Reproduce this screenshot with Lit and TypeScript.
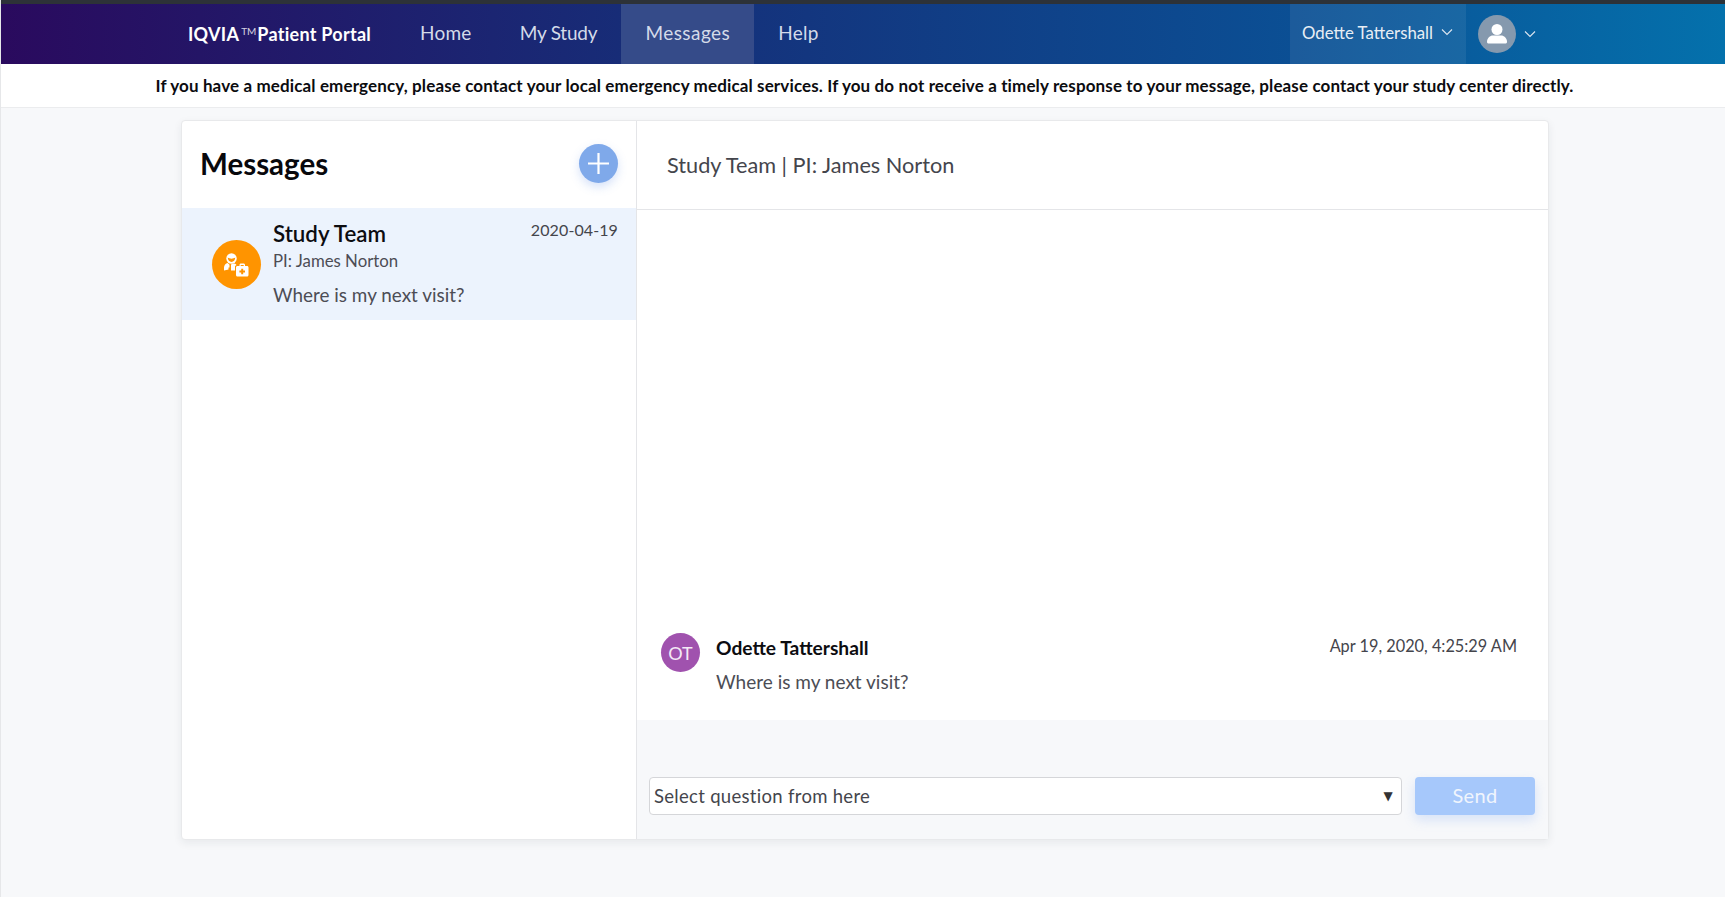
import { LitElement, html, css } from "lit";
import { customElement } from "lit/decorators.js";

const chevron = html`<svg class="chev" width="12" height="8" viewBox="0 0 12 8"><path d="M1 1.5l5 5 5-5" fill="none" stroke="currentColor" stroke-width="1.1"/></svg>`;

@customElement("app-root")
export class AppRoot extends LitElement {
    static styles = css`
    :host {
        display: block;
        height: 897px;
        overflow: hidden;
        background: #f7f8fa;
        font-family: "Lato", "Open Sans", sans-serif;
        color: #3f4048;
        border-left: 1px solid #e6e7e9;
        box-sizing: border-box;
    }

    .strip { height: 4px; background: #2d3238; margin-left: -1px; }

    nav {
        height: 60px;
        display: flex;
        align-items: stretch;
        background: linear-gradient(90deg, #2a0a5e 0%, #15307a 40%, #0b4f94 75%, #0471ac 100%);
        color: #fff;
        padding-left: 187px;
    }

    .brand {
        display: flex;
        align-items: center;
        width: 196px;
        font-size: 18px;
        font-weight: 700;
        letter-spacing: .27px;
        white-space: nowrap;
    }
    .brand sup { font-size: 10px; font-weight: 400; margin: -6px 1px 0 2px; opacity: .8; letter-spacing: 0; }

    .links { display: flex; margin-left: 12px; }
    .links a {
        display: flex;
        align-items: center;
        padding: 0 24px 4px;
        font-size: 19px;
        letter-spacing: .25px;
        color: #d4dbe9;
        box-sizing: border-box;
    }
    .links a.tight { letter-spacing: -.2px; }
    .links a.active { background: #354b89; letter-spacing: .45px; }

    .right { margin-left: auto; display: flex; align-items: stretch; padding-right: 189px; }
    .user {
        width: 176px;
        box-sizing: border-box;
        display: flex;
        align-items: center;
        gap: 8px;
        padding: 0 0 4px 12px;
        background: rgba(255, 255, 255, .07);
        font-size: 16.800px;
        color: #e8eef5;
        white-space: nowrap;
    }
    .chev { flex: none; color: #dde6f0; }
    .account { display: flex; align-items: center; gap: 8px; padding-left: 12px; }
    .face {
        width: 38px;
        height: 38px;
        border-radius: 50%;
        background: #8599ae;
        display: flex;
        align-items: center;
        justify-content: center;
    }

    .notice {
        height: 44px;
        background: #fff;
        border-bottom: 1px solid #ebecee;
        box-sizing: border-box;
        display: flex;
        align-items: center;
        justify-content: center;
        padding-left: 3px;
        font-size: 17px;
        letter-spacing: .125px;
        font-weight: 700;
        color: #0c0c10;
        white-space: nowrap;
    }

    .card {
        width: 1368px;
        height: 720px;
        margin: 12px 0 0 180px;
        display: flex;
        background: #fff;
        border: 1px solid #e8e9eb;
        border-radius: 4px;
        box-sizing: border-box;
        box-shadow: 0 3px 8px rgba(30, 40, 60, .07);
    }

    .list { width: 455px; flex: none; border-right: 1px solid #e4e5e8; box-sizing: border-box; }
    .list-head {
        height: 87px;
        display: flex;
        align-items: center;
        justify-content: space-between;
        padding: 0 18px;
        box-sizing: border-box;
    }
    h1 { margin: 0 0 3px; font-size: 29.500px; font-weight: 700; color: #08080c; }
    .add {
        width: 39px;
        height: 39px;
        margin-bottom: 2px;
        border-radius: 50%;
        border: none;
        padding: 0;
        background: #7fa9ea;
        box-shadow: 0 4px 10px rgba(90, 140, 230, .25);
        display: flex;
        align-items: center;
        justify-content: center;
    }

    .item {
        height: 112px;
        background: #ecf3fd;
        display: flex;
        align-items: center;
        padding: 0 18px 0 30px;
        box-sizing: border-box;
        position: relative;
    }
    .badge {
        width: 49px;
        height: 49px;
        border-radius: 50%;
        background: #ff9400;
        flex: none;
    }
    .badge svg { display: block; }
    .item-body { margin-left: 12px; flex: 1; }
    .item-title { font-size: 22.300px; font-weight: 600; color: #0c0c10; line-height: 26px; margin-top: -2px; }
    .item-sub { font-size: 16.800px; line-height: 20px; margin-top: 4px; color: #4c4d55; }
    .item-msg { font-size: 18.900px; line-height: 22px; margin-top: 13px; color: #4c4d55; }
    .item-date { position: absolute; top: 11px; right: 18px; font-size: 16px; letter-spacing: .1px; line-height: 22px; color: #44454c; }

    .thread { flex: 1; display: flex; flex-direction: column; min-width: 0; }
    .thread-head {
        height: 89px;
        flex: none;
        border-bottom: 1px solid #e4e5e8;
        display: flex;
        align-items: center;
        padding: 0 0 1px 30px;
        box-sizing: border-box;
        font-size: 21.700px;
        color: #44454c;
    }
    .messages {
        flex: 1;
        display: flex;
        flex-direction: column;
        justify-content: flex-end;
        padding: 0 30px 27px 24px;
    }
    .msg { display: flex; }
    .initials {
        width: 39px;
        height: 39px;
        border-radius: 50%;
        background: #a052ae;
        color: #f4e9f6;
        font-size: 18px;
        flex: none;
        display: flex;
        align-items: center;
        justify-content: center;
    }
    .msg-body { flex: 1; margin-left: 16px; }
    .msg-top { display: flex; justify-content: space-between; }
    .msg-name { font-size: 19.200px; font-weight: 700; color: #0c0c10; line-height: 24px; margin-top: 3px; }
    .msg-time { font-size: 16.300px; color: #44454c; line-height: 22px; margin: 2px 1px 0 0; }
    .msg-text { font-size: 19px; color: #4c4d55; line-height: 22px; margin-top: 11px; }

    .composer {
        height: 119px;
        flex: none;
        background: #f7f8fa;
        display: flex;
        align-items: flex-end;
        gap: 13px;
        padding: 0 13px 24px 12px;
        box-sizing: border-box;
    }
    .select {
        flex: 1;
        height: 38px;
        background: #fff;
        border: 1px solid #d5d6d9;
        border-radius: 4px;
        box-sizing: border-box;
        display: flex;
        align-items: center;
        justify-content: space-between;
        padding: 0 8px 1px 4px;
        font-size: 18.500px;
        letter-spacing: .3px;
        color: #44454c;
    }
    .caret { font-size: 12px; color: #333; font-family: "DejaVu Sans", sans-serif; }
    .send {
        width: 120px;
        height: 38px;
        border: none;
        border-radius: 4px;
        padding: 0 0 2px;
        background: #a6c8fb;
        color: #f0f5fd;
        font: inherit;
        font-size: 20px;
        letter-spacing: .3px;
        box-shadow: 0 5px 12px rgba(100, 150, 240, .22);
    }
    `;

    render() {
        return html`
        <div class="strip"></div>
        <nav>
            <div class="brand">IQVIA<sup>TM</sup>Patient Portal</div>
            <div class="links">
                <a>Home</a>
                <a class="tight">My Study</a>
                <a class="active">Messages</a>
                <a>Help</a>
            </div>
            <div class="right">
                <div class="user">Odette Tattershall ${chevron}</div>
                <div class="account">
                    <div class="face">
                        <svg width="22" height="22" viewBox="0 0 22 22" fill="#fff">
                            <circle cx="11" cy="6.500" r="5.500"/>
                            <path d="M1 19c0-4 3-6.500 6-6.500h8c3 0 6 2.500 6 6.500 0 1-1 1.500-2 1.500H3c-1 0-2-.5-2-1.500z"/>
                        </svg>
                    </div>
                    ${chevron}
                </div>
            </div>
        </nav>
        <div class="notice">If you have a medical emergency, please contact your local emergency medical services. If you do not receive a timely response to your message, please contact your study center directly.</div>
        <div class="card">
            <section class="list">
                <div class="list-head">
                    <h1>Messages</h1>
                    <button class="add" aria-label="New message">
                        <svg width="23" height="23" viewBox="0 0 23 23"><path d="M11.500 1v21M1 11.500h21" stroke="#fff" stroke-width="2.200"/></svg>
                    </button>
                </div>
                <div class="item">
                    <div class="badge">
                        <svg width="49" height="49" viewBox="-24.500 -24.500 49 49">
                            <circle cx="-5" cy="-6" r="5.200" fill="#fff"/>
                            <path d="M-8.800 -7c2 1.500 5.600 1.500 7.600 0-.2 2.800-1.700 4.400-3.800 4.400s-3.600-1.600-3.800-4.400z" fill="#ff9400"/>
                            <path d="M-12.500 6v-3c0-2.500 1.700-4 3.700-4.600l1.800 1.800v2.800h-1v2zM-5.500 .5l.5-1 3 -.5c.8.3 1.500.8 2 1.500l-1.500 1v4.500h-4z" fill="#fff"/>
                            <path d="M3 1.500v-1c0-1 .7-1.500 1.500-1.500h2.500c.8 0 1.500.5 1.500 1.500v1h2c.9 0 1.500.7 1.500 1.500v7.500c0 .9-.6 1.500-1.500 1.500h-9.500c-.9 0-1.500-.6-1.500-1.500v-7.500c0-.8.6-1.500 1.500-1.500zm1.200 0h3v-1h-3z" fill="#fff" fill-rule="evenodd"/>
                            <path d="M4.700 4.200h2v1.800h1.800v2h-1.800v1.800h-2v-1.800h-1.800v-2h1.800z" fill="#ff9400"/>
                        </svg>
                    </div>
                    <div class="item-body">
                        <div class="item-title">Study Team</div>
                        <div class="item-sub">PI: James Norton</div>
                        <div class="item-msg">Where is my next visit?</div>
                    </div>
                    <div class="item-date">2020-04-19</div>
                </div>
            </section>
            <section class="thread">
                <div class="thread-head">Study Team | PI: James Norton</div>
                <div class="messages">
                    <div class="msg">
                        <div class="initials">OT</div>
                        <div class="msg-body">
                            <div class="msg-top">
                                <div class="msg-name">Odette Tattershall</div>
                                <div class="msg-time">Apr 19, 2020, 4:25:29 AM</div>
                            </div>
                            <div class="msg-text">Where is my next visit?</div>
                        </div>
                    </div>
                </div>
                <div class="composer">
                    <div class="select">Select question from here <span class="caret">▼</span></div>
                    <button class="send">Send</button>
                </div>
            </section>
        </div>
        `;
    }
}
